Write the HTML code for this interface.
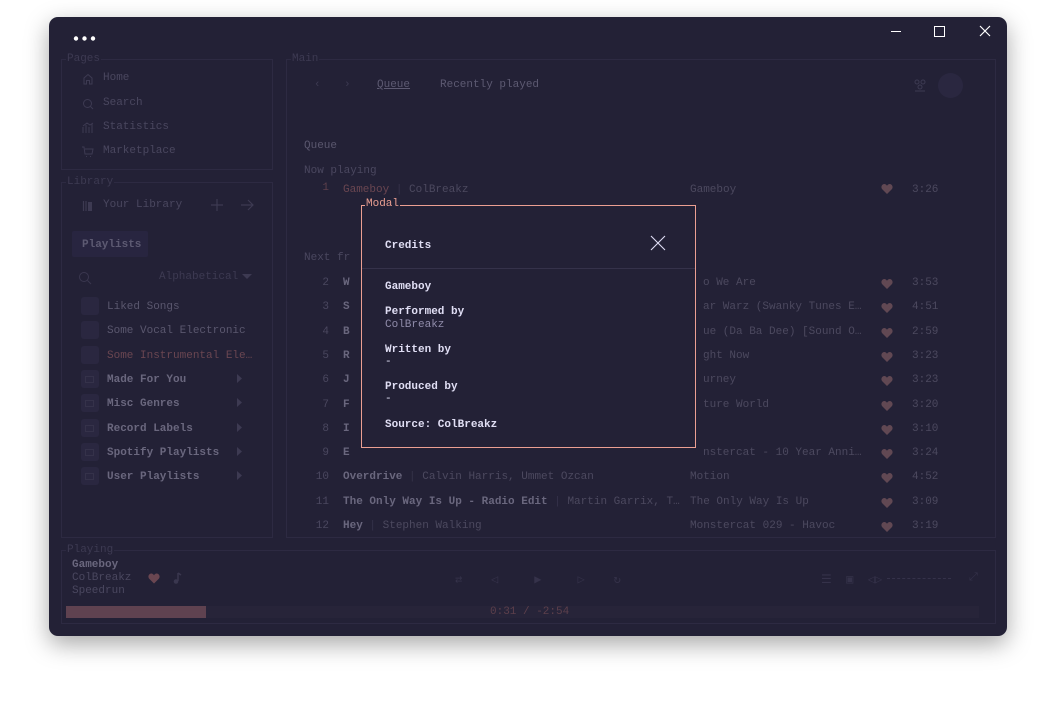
<!DOCTYPE html>
<html><head><meta charset="utf-8"><style>
*{margin:0;padding:0;box-sizing:border-box}
body{width:1056px;height:707px;background:#fff;font-family:"Liberation Mono",monospace;font-size:11px;position:relative;overflow:hidden}
.win{position:absolute;left:49px;top:17px;width:958px;height:619px;background:#232136;border-radius:9px;box-shadow:0 8px 24px rgba(0,0,0,.35)}
.a{position:absolute;white-space:nowrap}
.win .a{margin-top:2px}
.fs{position:absolute;border:1px solid #2d2a42}
.lg{position:absolute;top:-8px;left:4px;background:#232136;padding:0 1px;color:#3d3a52;font-size:11px;line-height:14px}
.d{color:#4a475f}
.m{color:#5d5a72}
.b{color:#6a677e;font-weight:bold}
.r{color:#6a4651}
.t{color:#4c495f}
.heart{position:absolute;width:12px;height:12px}
.sq{position:absolute;width:18px;height:18px;background:#2a2740;border-radius:3px}
.num{position:absolute;width:30px;text-align:right;color:#4a475f}
</style></head><body>
<div class="win">
 <div class="a" style="left:24px;top:16px;"><svg width="24" height="8"><circle cx="3" cy="3.5" r="2.2" fill="#fff"/><circle cx="11.5" cy="3.5" r="2.2" fill="#fff"/><circle cx="20" cy="3.5" r="2.2" fill="#fff"/></svg></div>
 <div class="a" style="left:842px;top:12px;width:10px;height:1px;background:#fff"></div>
 <div class="a" style="left:885px;top:7px;width:11px;height:11px;border:1.3px solid #fff"></div>
 <svg class="a" style="left:930px;top:6px" width="12" height="12"><path d="M1 1L11 11M11 1L1 11" stroke="#fff" stroke-width="1.2"/></svg>

 <div class="fs" style="left:12px;top:42px;width:212px;height:111px"><div class="lg">Pages</div></div>
 <svg class="a" style="left:33px;top:54px" width="12" height="12"><path d="M2 11V5L6 1.5L10 5V11H7.5V7.5H4.5V11Z" fill="none" stroke="#3d3a52"/></svg>
 <div class="a d" style="left:54px;top:53px">Home</div>
 <svg class="a" style="left:33px;top:79px" width="12" height="12"><circle cx="5.5" cy="5.5" r="4" fill="none" stroke="#3d3a52"/><path d="M8.5 8.5L11 11" stroke="#3d3a52"/></svg>
 <div class="a d" style="left:54px;top:78px">Search</div>
 <svg class="a" style="left:33px;top:103px" width="12" height="12"><path d="M1 11V5M4 11V3M7 11V5M10 11V2M1 4L5 1L8 3L11 1" fill="none" stroke="#3d3a52"/></svg>
 <div class="a d" style="left:54px;top:102px">Statistics</div>
 <svg class="a" style="left:33px;top:127px" width="12" height="12"><path d="M0 1H2L3 8H10L11 3H3M4 10.5h1M8 10.5h1" fill="none" stroke="#3d3a52"/></svg>
 <div class="a d" style="left:54px;top:126px">Marketplace</div>

 <div class="fs" style="left:12px;top:165px;width:212px;height:356px"><div class="lg">Library</div></div>
 <svg class="a" style="left:33px;top:181px" width="12" height="12"><path d="M1.5 1V11M4 1V11" stroke="#3d3a52" stroke-width="1.2"/><rect x="6" y="2" width="4" height="9" fill="#3d3a52"/></svg>
 <div class="a d" style="left:54px;top:180px">Your Library</div>
 <svg class="a" style="left:161px;top:179px" width="14" height="14"><path d="M7 1V13M1 7H13" stroke="#3d3a52" stroke-width="1.2"/></svg>
 <svg class="a" style="left:191px;top:179px" width="14" height="14"><path d="M1 7H13M8 2L13 7L8 12" fill="none" stroke="#3d3a52" stroke-width="1.2"/></svg>
 <div class="a" style="left:23px;top:212px;width:76px;height:26px;background:#282540;border-radius:2px"></div>
 <div class="a b" style="left:33px;top:220px;color:#5d5a72">Playlists</div>
 <svg class="a" style="left:29px;top:252px" width="14" height="14"><circle cx="6" cy="6" r="4.5" fill="none" stroke="#3a374f"/><path d="M9.5 9.5L13 13" stroke="#3a374f"/></svg>
 <div class="a t" style="left:110px;top:252px;color:#3d3a52">Alphabetical</div>
 <svg class="a" style="left:193px;top:255px" width="10" height="6"><path d="M0 0H10L5 5Z" fill="#3d3a52"/></svg>

 <div class="sq" style="left:32px;top:280px"></div><div class="a" style="left:58px;top:282px;color:#5a576e">Liked Songs</div>
 <div class="sq" style="left:32px;top:304px"></div><div class="a" style="left:58px;top:306px;color:#5a576e">Some Vocal Electronic</div>
 <div class="sq" style="left:32px;top:329px"></div><div class="a r" style="left:58px;top:331px">Some Instrumental Ele…</div>
 <div class="sq" style="left:32px;top:353px"></div><div class="a b" style="left:58px;top:355px">Made For You</div>
 <div class="sq" style="left:32px;top:377px"></div><div class="a b" style="left:58px;top:379px">Misc Genres</div>
 <div class="sq" style="left:32px;top:402px"></div><div class="a b" style="left:58px;top:404px">Record Labels</div>
 <div class="sq" style="left:32px;top:426px"></div><div class="a b" style="left:58px;top:428px">Spotify Playlists</div>
 <div class="sq" style="left:32px;top:450px"></div><div class="a b" style="left:58px;top:452px">User Playlists</div>
 <svg class="a" style="left:36px;top:356px" width="10" height="120"><g fill="none" stroke="#35324a"><rect x="0.5" y="1.5" width="8" height="6"/><rect x="0.5" y="25.5" width="8" height="6"/><rect x="0.5" y="50.5" width="8" height="6"/><rect x="0.5" y="74.5" width="8" height="6"/><rect x="0.5" y="98.5" width="8" height="6"/></g></svg>
 <svg class="a" style="left:188px;top:355px" width="6" height="120"><g fill="#3d3a52"><path d="M0 0L5 4.5L0 9Z"/><path d="M0 24L5 28.5L0 33Z"/><path d="M0 49L5 53.5L0 58Z"/><path d="M0 73L5 77.5L0 82Z"/><path d="M0 97L5 101.5L0 106Z"/></g></svg>

 <div class="fs" style="left:237px;top:42px;width:710px;height:479px"><div class="lg">Main</div></div>
 <div class="a" style="left:265px;top:60px;color:#3d3a52">‹</div>
 <div class="a" style="left:295px;top:60px;color:#3d3a52">›</div>
 <div class="a m" style="left:328px;top:60px;text-decoration:underline">Queue</div>
 <div class="a m" style="left:391px;top:60px">Recently played</div>
 <svg class="a" style="left:865px;top:60px" width="12" height="13"><g fill="none" stroke="#3d3a52"><circle cx="3" cy="3" r="2"/><circle cx="9" cy="3" r="2"/><circle cx="6" cy="8" r="2"/><path d="M1 12H11"/></g></svg>
 <div class="a" style="left:889px;top:54px;width:25px;height:25px;border-radius:50%;background:#2a2740"></div>

 <div class="a" style="left:255px;top:121px;color:#5a576e">Queue</div>
 <div class="a d" style="left:255px;top:146px">Now playing</div>
 <div class="num" style="left:250px;top:165px;color:#5c3f4b">1</div>
 <div class="a r" style="left:294px;top:165px">Gameboy <span style="color:#35324a">|</span> <span class="t">ColBreakz</span></div>
 <div class="a t" style="left:641px;top:165px">Gameboy</div>
 <div class="a t" style="left:863px;top:165px">3:26</div>
 <div class="a d" style="left:255px;top:233px">Next fr</div>

 <div class="fs" style="left:12px;top:533px;width:935px;height:74px"><div class="lg">Playing</div></div>
 <div class="a b" style="left:23px;top:540px;color:#6a677e">Gameboy</div>
 <div class="a d" style="left:23px;top:553px">ColBreakz</div>
 <div class="a d" style="left:23px;top:566px">Speedrun</div>
 <svg class="a" style="left:99px;top:554px" width="12" height="11"><path d="M6 10.5L1 5.5C-0.5 3.5 1 0.5 3.3 0.5C4.6 0.5 5.5 1.5 6 2.3C6.5 1.5 7.4 0.5 8.7 0.5C11 0.5 12.5 3.5 11 5.5Z" fill="#6a4651"/></svg>
 <svg class="a" style="left:123px;top:553px" width="10" height="12"><path d="M6 1V9" stroke="#3a374f" stroke-width="1.5"/><circle cx="4" cy="9.5" r="2.3" fill="#3a374f"/><path d="M6 1L9 3" stroke="#3a374f" stroke-width="1.5"/></svg>
 <div class="a" style="left:17px;top:587px;width:913px;height:12px;background:#272439"></div>
 <div class="a" style="left:17px;top:587px;width:140px;height:12px;background:#5f4250"></div>
 <div class="a" style="left:441px;top:587px;color:#5c3f4b">0:31 / -2:54</div>
 <div class="a" style="left:406px;top:553px;color:#35324a;font-size:12px">⇄&nbsp;&nbsp;&nbsp;&nbsp;◁&nbsp;&nbsp;&nbsp;&nbsp;&nbsp;▶&nbsp;&nbsp;&nbsp;&nbsp;&nbsp;▷&nbsp;&nbsp;&nbsp;&nbsp;↻</div>
 <div class="a" style="left:772px;top:553px;color:#35324a;font-size:12px">☰&nbsp;&nbsp;▣&nbsp;&nbsp;◁▷</div>
 <div class="a" style="left:838px;top:559px;width:64px;border-top:1px dashed #35324a"></div>
 <div class="a" style="left:920px;top:553px;color:#35324a">⤢</div>
</div>

<div id="rows"></div>

<div class="a" style="left:361px;top:205px;width:335px;height:243px;border:1px solid #eb9f92;background:#232136">
 <div class="a" style="left:3px;top:-8px;background:#232136;color:#eb9f92;padding:0 1px;line-height:13px">Modal</div>
 <div class="a" style="left:23px;top:34px;color:#e0def4;font-weight:bold">Credits</div>
 <svg class="a" style="left:288px;top:29px" width="16" height="16"><path d="M1 1L15 15M15 1L1 15" stroke="#e0def4" stroke-width="1.1"/></svg>
 <div class="a" style="left:0;top:62px;width:333px;height:1px;background:#35324a"></div>
 <div class="a" style="left:23px;top:75px;color:#e0def4;font-weight:bold">Gameboy</div>
 <div class="a" style="left:23px;top:100px;color:#e0def4;font-weight:bold">Performed by</div>
 <div class="a" style="left:23px;top:113px;color:#908caa">ColBreakz</div>
 <div class="a" style="left:23px;top:138px;color:#e0def4;font-weight:bold">Written by</div>
 <div class="a" style="left:23px;top:150px;color:#e0def4">-</div>
 <div class="a" style="left:23px;top:175px;color:#e0def4;font-weight:bold">Produced by</div>
 <div class="a" style="left:23px;top:187px;color:#e0def4">-</div>
 <div class="a" style="left:23px;top:213px;color:#e0def4;font-weight:bold">Source: ColBreakz</div>
</div>

<script>
var rows=[["W","o We Are","3:53"],["S","ar Warz (Swanky Tunes E…","4:51"],["B","ue (Da Ba Dee) [Sound O…","2:59"],["R","ght Now","3:23"],["J","urney","3:23"],["F","ture World","3:20"],["I","","3:10"],["E","nstercat - 10 Year Anni…","3:24"],
["Overdrive","Motion","4:52","Calvin Harris, Ummet Ozcan"],["The Only Way Is Up - Radio Edit","The Only Way Is Up","3:09","Martin Garrix, T…"],["Hey","Monstercat 029 - Havoc","3:19","Stephen Walking"]];
var h="";
var hp='<path d="M6 10.5L1 5.5C-0.5 3.5 1 0.5 3.3 0.5C4.6 0.5 5.5 1.5 6 2.3C6.5 1.5 7.4 0.5 8.7 0.5C11 0.5 12.5 3.5 11 5.5Z" fill="#614853"/>';
rows.forEach(function(r,i){
 var y=Math.round(277+i*24.3); var n=i+2;
 h+='<div class="num" style="left:299px;top:'+y+'px">'+n+'</div>';
 h+='<div class="a b" style="left:343px;top:'+y+'px">'+r[0]+(r[3]?' <span style="color:#35324a;font-weight:normal">|</span> <span class="t" style="font-weight:normal">'+r[3]+'</span>':'')+'</div>';
 h+='<div class="a t" style="left:'+(r[3]?690:703)+'px;top:'+y+'px">'+r[1]+'</div>';
 h+='<svg class="heart" style="left:881px;top:'+(y+1)+'px" viewBox="0 0 12 11">'+hp+'</svg>';
 h+='<div class="a t" style="left:912px;top:'+y+'px">'+r[2]+'</div>';
});
h+='<svg class="heart" style="left:881px;top:183px" viewBox="0 0 12 11">'+hp+'</svg>';
document.getElementById("rows").outerHTML=h;
</script>
</body></html>
